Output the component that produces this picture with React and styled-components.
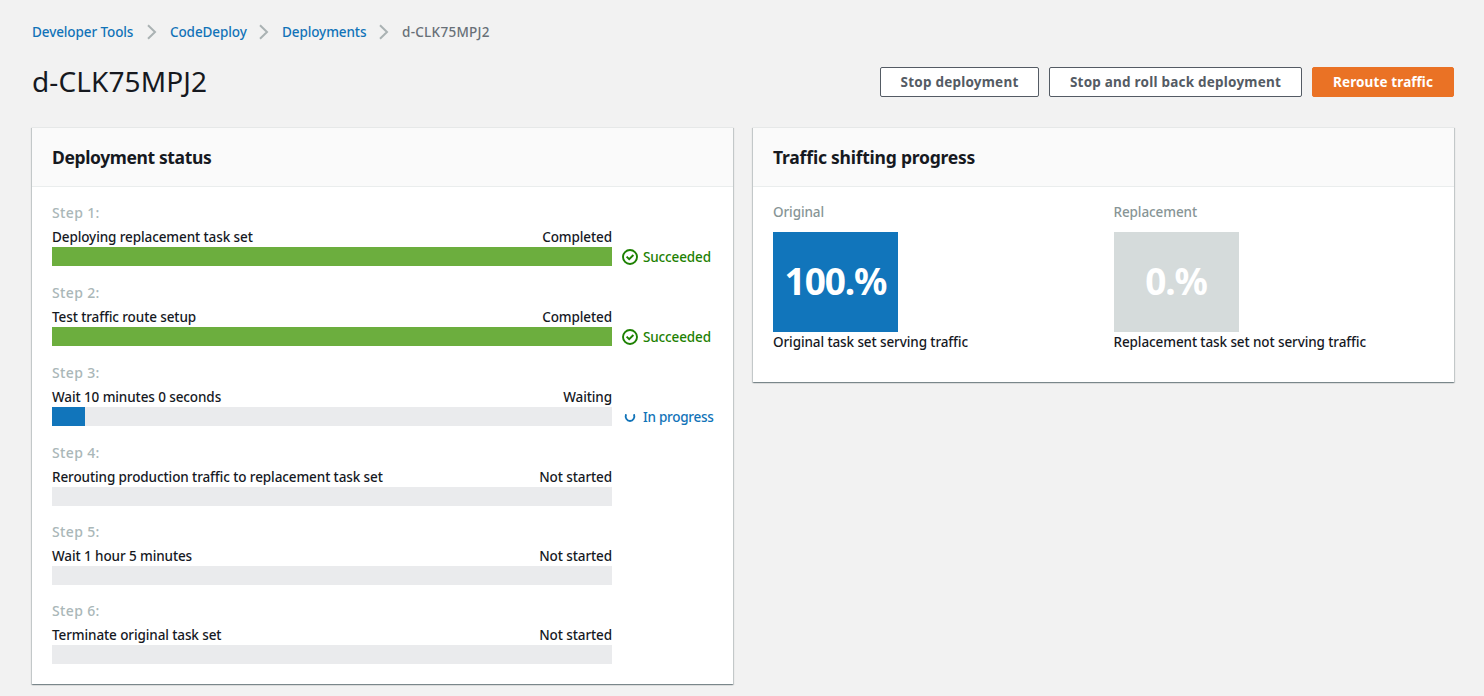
import React from 'react';
import styled, { createGlobalStyle } from 'styled-components';

const GlobalStyle = createGlobalStyle`
  * { box-sizing: border-box; }
  body {
    margin: 0;
    background: #f2f2f2;
    color: #16191f;
    font-family: "Noto Sans", "Open Sans", sans-serif;
    font-size: 13.5px;
    font-weight: 500;
    font-feature-settings: "liga" 1;
    letter-spacing: -0.1px;
    line-height: 20px;
    -webkit-font-smoothing: antialiased;
  }
`;

const Page = styled.main`
  padding: 22px 30px 12px 32px;
`;

const Breadcrumbs = styled.nav`
  display: flex;
  align-items: center;
  height: 20px;
`;

const Crumb = styled.span`
  width: ${(p) => p.$width}px;
  white-space: nowrap;
  color: ${(p) => (p.$current ? '#687078' : '#1173b8')};
  letter-spacing: ${(p) => (p.$current ? 0.28 : -0.1)}px;
`;

const Separator = styled.svg`
  flex: none;
  width: 10px;
  height: 16px;
  margin: 0 13px;
  fill: none;
  stroke: #aab2b3;
  stroke-width: 2;
`;

const TitleBar = styled.header`
  display: flex;
  justify-content: space-between;
  align-items: center;
  height: 40px;
  margin-top: 20px;
`;

const Title = styled.h1`
  margin: 0 0 2px;
  font-size: 28px;
  font-weight: 400;
  letter-spacing: 0.1px;
  line-height: 38px;
`;

const Actions = styled.div`
  display: flex;
  gap: 10px;
`;

const Button = styled.button`
  width: ${(p) => p.$width}px;
  height: 30px;
  padding: 0;
  border: 1px solid ${(p) => (p.$primary ? '#ea7225' : '#545b64')};
  border-radius: 2px;
  background: ${(p) => (p.$primary ? '#ea7225' : '#fff')};
  color: ${(p) => (p.$primary ? '#fff' : '#545b64')};
  font: inherit;
  font-feature-settings: inherit;
  font-weight: 700;
  letter-spacing: ${(p) => (p.$primary ? 0.12 : 0.22)}px;
  line-height: 28px;
  white-space: nowrap;
`;

const Columns = styled.div`
  display: grid;
  grid-template-columns: repeat(2, minmax(0, 1fr));
  align-items: start;
  gap: 20px;
  margin-top: 25px;
`;

const Panel = styled.section`
  border-top: 1px solid #e6e8e8;
  background: #fff;
  box-shadow:
    0 1px 1px 0 rgba(0, 28, 36, 0.3),
    1px 1px 1px 0 rgba(0, 28, 36, 0.15),
    -1px 1px 1px 0 rgba(0, 28, 36, 0.15);
`;

const PanelHeader = styled.h2`
  height: 59px;
  margin: 0;
  padding: 0 20px;
  border-bottom: 1px solid #eaeded;
  background: #fafafa;
  font-size: 17.5px;
  font-weight: 700;
  letter-spacing: ${(p) => p.$spacing}px;
  line-height: 58px;
`;

const Steps = styled.div`
  display: flex;
  flex-direction: column;
  gap: 16px;
  padding: 16px 20px 20px;
`;

const StepLabel = styled.div`
  margin-bottom: 4px;
  color: #aab7b8;
  font-size: 14px;
  letter-spacing: 0.35px;
`;

const StepInfo = styled.div`
  display: flex;
  justify-content: space-between;
  width: 560px;
`;

const ProgressRow = styled.div`
  display: flex;
  align-items: flex-start;
  height: ${(p) => (p.$tall ? 20 : 19)}px;
`;

const Track = styled.div`
  flex: none;
  width: 560px;
  height: 19px;
  background: #eaebed;
`;

const Fill = styled.div`
  width: ${(p) => p.$value}%;
  height: 100%;
  background: ${(p) => (p.$done ? '#6cae3e' : '#1175bb')};
`;

const Status = styled.div`
  display: flex;
  align-items: center;
  gap: 5px;
  margin-left: 10px;
  color: ${(p) => (p.$done ? '#1d8102' : '#1173b8')};
  letter-spacing: ${(p) => (p.$done ? -0.14 : -0.26)}px;
  white-space: nowrap;
`;

const StatusIcon = styled.svg`
  flex: none;
  width: 16px;
  height: 16px;
  fill: none;
  stroke: currentColor;
  stroke-width: 1.9;
`;

const Traffic = styled.div`
  display: grid;
  grid-template-columns: repeat(2, minmax(0, 1fr));
  gap: 20px;
  padding: 15px 20px 30px;
`;

const TrafficLabel = styled.div`
  margin-bottom: 10px;
  color: #879596;
`;

const TrafficShare = styled.div`
  width: 125px;
  height: 100px;
  background: ${(p) => (p.$active ? '#1175bb' : '#d5dbdb')};
  color: #fff;
  font-size: 37px;
  font-weight: 700;
  letter-spacing: -1.1px;
  line-height: 98px;
  text-align: center;
`;

const steps = [
  { title: 'Deploying replacement task set', state: 'Completed', value: 100, status: 'Succeeded' },
  { title: 'Test traffic route setup', state: 'Completed', value: 100, status: 'Succeeded' },
  { title: 'Wait 10 minutes 0 seconds', state: 'Waiting', value: 5.9, status: 'In progress' },
  { title: 'Rerouting production traffic to replacement task set', state: 'Not started', value: 0 },
  { title: 'Wait 1 hour 5 minutes', state: 'Not started', value: 0 },
  { title: 'Terminate original task set', state: 'Not started', value: 0 },
];

const Chevron = () => (
  <Separator viewBox="0 0 10 16">
    <path d="M1 1.2 8 8 1 14.8" />
  </Separator>
);

const SuccessIcon = () => (
  <StatusIcon viewBox="0 0 16 16">
    <circle cx="8" cy="8" r="7" />
    <path d="m4.6 7.6 2.6 2.6 4.2-4.2" />
  </StatusIcon>
);

const Spinner = () => (
  <StatusIcon viewBox="0 0 16 16">
    <path d="M4 5.2C2.9 8.600 4.800 12 8 12S13.100 8.600 12 5.200" />
  </StatusIcon>
);

function Step({ number, title, state, value, status }) {
  const done = value === 100;
  return (
    <div>
      <StepLabel>Step {number}:</StepLabel>
      <StepInfo>
        <span>{title}</span>
        <span>{state}</span>
      </StepInfo>
      <ProgressRow $tall={Boolean(status)}>
        <Track>
          <Fill $value={value} $done={done} />
        </Track>
        {status && (
          <Status $done={done}>
            {done ? <SuccessIcon /> : <Spinner />}
            <span>{status}</span>
          </Status>
        )}
      </ProgressRow>
    </div>
  );
}

export default function App() {
  return (
    <>
      <GlobalStyle />
      <Page>
        <Breadcrumbs>
          <Crumb $width={102}>Developer Tools</Crumb>
          <Chevron />
          <Crumb $width={76}>CodeDeploy</Crumb>
          <Chevron />
          <Crumb $width={84}>Deployments</Crumb>
          <Chevron />
          <Crumb $width={88} $current>d-CLK75MPJ2</Crumb>
        </Breadcrumbs>
        <TitleBar>
          <Title>d-CLK75MPJ2</Title>
          <Actions>
            <Button $width={159}>Stop deployment</Button>
            <Button $width={253}>Stop and roll back deployment</Button>
            <Button $width={142} $primary>Reroute traffic</Button>
          </Actions>
        </TitleBar>
        <Columns>
          <Panel>
            <PanelHeader $spacing={-0.38}>Deployment status</PanelHeader>
            <Steps>
              {steps.map((step, i) => (
                <Step key={step.title} number={i + 1} {...step} />
              ))}
            </Steps>
          </Panel>
          <Panel>
            <PanelHeader $spacing={-0.24}>Traffic shifting progress</PanelHeader>
            <Traffic>
              <div>
                <TrafficLabel>Original</TrafficLabel>
                <TrafficShare $active>100.%</TrafficShare>
                <div>Original task set serving traffic</div>
              </div>
              <div>
                <TrafficLabel>Replacement</TrafficLabel>
                <TrafficShare>0.%</TrafficShare>
                <div>Replacement task set not serving traffic</div>
              </div>
            </Traffic>
          </Panel>
        </Columns>
      </Page>
    </>
  );
}
